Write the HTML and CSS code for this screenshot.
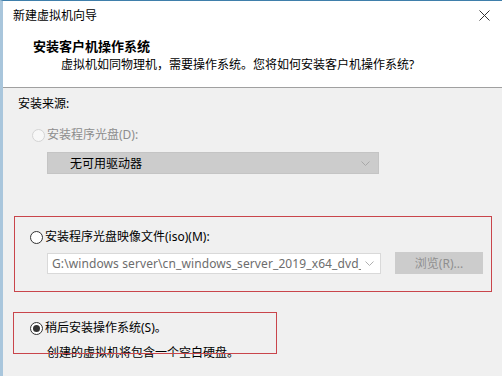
FILE: index.html
```html
<!DOCTYPE html>
<html lang="zh-CN">
<head>
    <meta charset="UTF-8">
    <meta name="viewport" content="width=device-width, initial-scale=1.0">
    <title>新建虚拟机向导</title>
    <link rel="stylesheet" href="styles.css">
</head>
<body>
    <div class="window">
        <!-- Title bar -->
        <div class="titlebar">
            <div class="title">新建虚拟机向导</div>
            <svg class="close" width="11" height="11" viewBox="0 0 11 11">
                <path d="M0.5 0.5 L10.5 10.5 M10.5 0.5 L0.5 10.5" stroke="#333" stroke-width="1" fill="none"/>
            </svg>
        </div>
        <!-- Header -->
        <div class="header">
            <div class="heading">安装客户机操作系统</div>
            <div class="subtitle">虚拟机如同物理机，需要操作系统。您将如何安装客户机操作系统?</div>
        </div>
        <!-- Main Content -->
        <div class="content">
            <div class="section-label">安装来源:</div>

            <div class="radio-row disabled first">
                <span class="radio"></span>
                <span>安装程序光盘(D):</span>
            </div>
            <div class="select disabled-select">
                <span>无可用驱动器</span>
                <svg class="chevron" width="9" height="5" viewBox="0 0 9 5">
                    <path d="M0.5 0.5 L4.5 4.5 L8.5 0.5" stroke="#a8a8a8" fill="none"/>
                </svg>
            </div>

            <div class="radio-row second">
                <span class="radio"></span>
                <span>安装程序光盘映像文件(iso)(M):</span>
            </div>
            <div class="iso-row">
                <div class="select iso-select">
                    <span class="path">G:\windows server\cn_windows_server_2019_x64_dvd_</span>
                    <svg class="chevron" width="9" height="5" viewBox="0 0 9 5">
                        <path d="M0.5 0.5 L4.5 4.5 L8.5 0.5" stroke="#b0b0b0" fill="none"/>
                    </svg>
                </div>
                <div class="button">浏览(R)...</div>
            </div>

            <div class="radio-row third">
                <span class="radio checked"></span>
                <span>稍后安装操作系统(S)。</span>
            </div>
            <div class="note">创建的虚拟机将包含一个空白硬盘。</div>

            <!-- Annotation boxes -->
            <div class="mark mark-iso"></div>
            <div class="mark mark-later"></div>
        </div>
    </div>
</body>
</html>
```

FILE: styles.css
```css
body {
    margin: 0;
    padding: 0;
    width: 502px;
    height: 376px;
    overflow: hidden;
    font-family: "Noto Sans", "Noto Sans CJK SC", sans-serif;
    font-size: 12px;
    color: #000;
    background-color: #f0f0f0;
}
/* Window frame */
.window {
    position: relative;
    height: 375px;
    border-top: 1px solid #3f7fab;
    border-left: 3px solid #a9c6dc;
    background-color: #f0f0f0;
}
.titlebar {
    height: 29px;
    background-color: #fff;
    display: flex;
    align-items: center;
    justify-content: space-between;
    padding: 0 12px 0 10px;
}
.title {
    line-height: 16px;
}
.close {
    display: block;
}
/* Header */
.header {
    background-color: #fff;
    padding: 8px 0 14px;
    border-bottom: 1px solid #a0a0a0;
}
.heading {
    font-weight: bold;
    font-size: 13px;
    line-height: 16px;
    padding-left: 30px;
}
.subtitle {
    line-height: 16px;
    margin-top: 3px;
    padding-left: 58px;
}
/* Main Content */
.content {
    position: relative;
    padding: 8px 0 0 15px;
}
.section-label {
    line-height: 16px;
}
.radio-row {
    display: flex;
    align-items: center;
    line-height: 16px;
    gap: 2px;
}
.radio-row.first {
    margin: 15px 0 0 14px;
}
.radio-row.second {
    margin: 55px 0 0 12px;
}
.radio-row.third {
    margin: 46px 0 0 12px;
}
.radio {
    width: 11px;
    height: 11px;
    border-radius: 50%;
    border: 1px solid #333;
    background-color: #fff;
    position: relative;
    flex-shrink: 0;
}
.radio.checked::after {
    content: "";
    position: absolute;
    left: 2px;
    top: 2px;
    width: 7px;
    height: 7px;
    border-radius: 50%;
    background-color: #333;
}
.radio-row.disabled {
    color: #8d8d8d;
}
.radio-row.disabled .radio {
    border-color: #d4d4d4;
    background-color: #f7f7f7;
}
/* Selects */
.select {
    display: flex;
    align-items: center;
    justify-content: space-between;
    box-sizing: border-box;
}
.disabled-select {
    width: 332px;
    height: 22px;
    margin: 9px 0 0 29px;
    background-color: #cccccc;
    border: 1px solid #c4c4c4;
    padding: 0 8px 0 22px;
}
.iso-row {
    display: flex;
    align-items: center;
    gap: 14px;
    margin: 7px 0 0 29px;
}
.iso-select {
    width: 334px;
    height: 21px;
    background-color: #fff;
    border: 1px solid #d9d9d9;
    padding: 0 6px 0 4px;
    color: #6d6d6d;
}
.iso-select .path {
    white-space: nowrap;
    overflow: hidden;
    flex: 1;
    letter-spacing: 0.1px;
}
.chevron {
    display: block;
    flex-shrink: 0;
    margin-left: 4px;
}
.button {
    width: 88px;
    height: 22px;
    background-color: #cccccc;
    color: #8f8f8f;
    display: flex;
    align-items: center;
    justify-content: center;
}
.note {
    line-height: 16px;
    margin: 9px 0 0 29px;
}
/* Annotation boxes */
.mark {
    position: absolute;
    border: 1px solid #c9454b;
    box-sizing: border-box;
}
.mark-iso {
    left: 11px;
    top: 128px;
    width: 478px;
    height: 76px;
}
.mark-later {
    left: 10px;
    top: 224px;
    width: 264px;
    height: 42px;
}
```
